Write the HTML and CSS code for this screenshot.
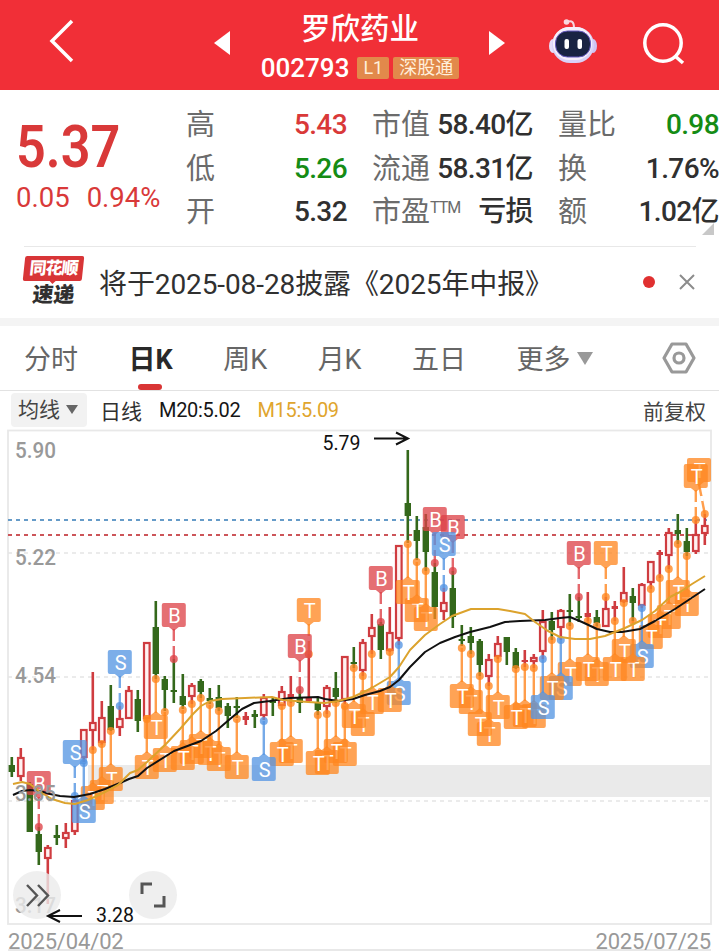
FILE: index.html
```html
<!DOCTYPE html>
<html lang="zh-CN">

<head>
    <meta charset="UTF-8">
    <title>罗欣药业 002793</title>
    <link rel="stylesheet" href="styles.css">
</head>

<body>
    <header class="header">
        <svg class="back" width="28" height="44" viewBox="0 0 28 44"><path d="M24 2 L4 22 L24 42" /></svg>
        <svg class="arrow prev" width="16" height="24" viewBox="0 0 16 24"><path d="M16 0 V24 L0 12 Z" /></svg>
        <div class="title">
            <h1>罗欣药业</h1>
            <div class="code">
                <span>002793</span>
                <span class="tag">L1</span>
                <span class="tag">深股通</span>
            </div>
        </div>
        <svg class="arrow" width="16" height="24" viewBox="0 0 16 24"><path d="M0 0 V24 L16 12 Z" /></svg>
        <svg class="robot" width="50" height="46" viewBox="0 0 50 46">
            <path d="M19 4 C24 2 26 4 26 10" fill="none" stroke="#f6d5df" stroke-width="2" />
            <circle cx="18.500" cy="4" r="2.800" fill="#f9d7df" />
            <ellipse cx="5" cy="28" rx="4" ry="7" fill="#e6ddf8" />
            <ellipse cx="45" cy="28" rx="4" ry="7" fill="#cfc3f2" />
            <rect x="4" y="9" width="42" height="36" rx="18" fill="#d9d2f8" />
            <rect x="5" y="9" width="39" height="33" rx="16" fill="#f6effb" />
            <rect x="7.500" y="13" width="35" height="26" rx="12" fill="#192342" stroke="#665bc0" stroke-width="1" />
            <rect x="16.500" y="21" width="4.500" height="10" rx="2" fill="#fff" />
            <rect x="29.500" y="21" width="4.500" height="10" rx="2" fill="#fff" />
        </svg>
        <svg class="search" width="42" height="42" viewBox="0 0 42 42"><circle cx="20" cy="20" r="18.200" /><path d="M32 33 L40 40" /></svg>
    </header>

    <section class="quote">
        <div class="price">
            <div class="now">5.37</div>
            <div class="change"><span>0.05</span><span>0.94%</span></div>
        </div>
        <dl class="stats">
            <dt>高</dt><dd class="up">5.43</dd>
            <dt>市值</dt><dd>58.40亿</dd>
            <dt>量比</dt><dd class="down">0.98</dd>
            <dt>低</dt><dd class="down">5.26</dd>
            <dt>流通</dt><dd>58.31亿</dd>
            <dt>换</dt><dd>1.76%</dd>
            <dt>开</dt><dd>5.32</dd>
            <dt>市盈<sup>TTM</sup></dt><dd>亏损</dd>
            <dt>额</dt><dd>1.02亿</dd>
        </dl>
        <i class="corner"></i>
    </section>

    <section class="notice">
        <div class="logo">
            <span class="logo-top">同花顺</span>
            <span class="logo-bottom">速递</span>
        </div>
        <p>将于2025-08-28披露《2025年中报》</p>
        <i class="dot"></i>
        <svg class="close" width="16" height="16" viewBox="0 0 16 16"><path d="M1 1 L15 15 M15 1 L1 15" /></svg>
    </section>

    <nav class="tabs">
        <a>分时</a>
        <a class="active">日K</a>
        <a>周K</a>
        <a>月K</a>
        <a>五日</a>
        <a class="more">更多<i class="caret"></i></a>
        <svg class="setting" width="34" height="32" viewBox="0 0 34 32"><path d="M10 2 H24 L32 16 L24 30 H10 L2 16 Z" /><circle cx="17" cy="16" r="5" /></svg>
    </nav>

    <div class="legend">
        <button>均线<i class="caret"></i></button>
        <span class="line-name">日线</span>
        <span class="m20">M20:5.02</span>
        <span class="m15">M15:5.09</span>
        <span class="adjust">前复权</span>
    </div>

    <svg id="chart" class="chart" width="719" height="498" viewBox="0 428 719 498"></svg>
    <footer class="dates"><span>2025/04/02</span><span>2025/07/25</span></footer>

    <script src="chart.js"></script>
</body>

</html>
```
FILE: styles.css
```css
* {
    box-sizing: border-box;
}

body {
    margin: 0;
    width: 719px;
    height: 952px;
    overflow: hidden;
    background: #fff;
    color: #303030;
    font-family: Roboto, "Noto Sans CJK SC", sans-serif;
}

h1, p, dl, dd {
    margin: 0;
}

.header {
    display: grid;
    grid-template-columns: 124px 136px 200px 74px 78px 102px;
    align-items: center;
    justify-items: center;
    height: 90px;
    padding-bottom: 6px;
    background: #f12f37;
    color: #fff;
}

.back, .search {
    fill: none;
    stroke: #fff;
    stroke-width: 3.5;
}

.back {
    margin-top: -3px;
}

.search {
    margin: 2px 0 0 2px;
}

.robot {
    margin-top: -4px;
}

.arrow {
    fill: #fff;
}

.prev {
    margin-left: 60px;
}

.title h1 {
    height: 44px;
    line-height: 44px;
    font-size: 29.5px;
    font-weight: 500;
    text-align: center;
}

.code {
    display: flex;
    align-items: center;
    height: 34px;
    font-size: 26px;
    font-weight: 500;
    white-space: nowrap;
}

.title {
    padding-top: 7px;
}

.tag {
    height: 22px;
    margin-left: 4px;
    padding: 0 6px;
    border-radius: 2px;
    background: #e2894b;
    color: #fff0dc;
    font-size: 18px;
    font-weight: 400;
    line-height: 21px;
}

.code span:nth-child(2) {
    margin-left: 8px;
}

.quote {
    position: relative;
    display: flex;
    height: 156px;
    padding-top: 12px;
}

.price {
    width: 186px;
    padding-left: 16px;
    color: #d93939;
}

.now {
    height: 72px;
    padding-top: 9px;
    font-size: 60px;
    font-weight: 600;
    line-height: 72px;
    transform: scaleX(.87);
    transform-origin: left;
}

.change {
    display: flex;
    gap: 17px;
    margin-top: 5px;
    font-size: 27.5px;
    line-height: 38px;
}

.stats {
    display: grid;
    grid-template-columns: 60px 101px 26px 60px 100px 25px 60px 101px;
    grid-auto-rows: 43.5px;
    width: 533px;
    padding-top: 1px;
    font-size: 28px;
    line-height: 43.5px;
    white-space: nowrap;
}

.stats dt {
    color: #6b6b6b;
    font-size: 29px;
    padding-top: 1px;
}

.stats dt:nth-of-type(3n+1) { grid-column: 1; }
.stats dd:nth-of-type(3n+1) { grid-column: 2; }
.stats dt:nth-of-type(3n+2) { grid-column: 4; margin-left: -1px; }
.stats dd:nth-of-type(3n+2) { grid-column: 5; }
.stats dt:nth-of-type(3n) { grid-column: 7; }
.stats dd:nth-of-type(3n) { grid-column: 8; }

.stats dd {
    display: flex;
    justify-content: flex-end;
    font-weight: 500;
    letter-spacing: -.6px;
}

.stats sup {
    font-size: 16px;
    letter-spacing: -1px;
    line-height: 0;
    vertical-align: 9px;
}

.stats .up {
    color: #d93939;
}

.stats .down {
    color: #158c15;
}

.corner {
    position: absolute;
    right: 5px;
    bottom: 11px;
    border-left: 12px solid transparent;
    border-bottom: 12px solid #c8c8c8;
}

.notice {
    display: flex;
    align-items: center;
    height: 80px;
    padding: 0 24px 8px;
    background:
        linear-gradient(#e8e8e8, #e8e8e8) 24px 0 / 672px 1px no-repeat,
        linear-gradient(#f4f4f4, #f4f4f4) 0 100% / 100% 8px no-repeat;
}

.logo {
    width: 59px;
    height: 52px;
    text-align: center;
    font-weight: 900;
}

.logo-top, .logo-bottom {
    display: block;
    transform: skewX(-6deg);
}

.logo-top {
    height: 25px;
    border-radius: 2px;
    background: #d83537;
    color: #fff;
    font-size: 17px;
    line-height: 24px;
    letter-spacing: -1px;
}

.logo-top::after {
    content: "";
    display: block;
    width: 0;
    margin: 0 auto;
    border: 4px solid transparent;
    border-top-color: #d83537;
}

.logo-bottom {
    font-size: 21px;
    line-height: 29px;
}

.notice p {
    flex: 1;
    padding-left: 16px;
    font-size: 28px;
    letter-spacing: -.1px;
    white-space: nowrap;
}

.dot {
    width: 12px;
    height: 12px;
    margin-right: 24px;
    border-radius: 50%;
    background: #e03030;
}

.close {
    fill: none;
    stroke: #8c8c8c;
    stroke-width: 2;
}

.tabs {
    display: flex;
    align-items: center;
    height: 65px;
    padding: 0 23px 0 24px;
    border-bottom: 1px solid #e2e2e2;
    color: #666;
    font-size: 27px;
    line-height: 64px;
}

.tabs a {
    height: 64px;
    margin-right: 50.5px;
    padding-top: 2px;
}

.tabs .active {
    position: relative;
    color: #292929;
    font-weight: 700;
}

.active::after {
    content: "";
    position: absolute;
    left: 9px;
    bottom: 0;
    width: 24px;
    height: 6px;
    border-radius: 3px;
    background: #d93535;
}

.caret {
    display: inline-block;
    border: 8px solid transparent;
    border-top: 13px solid #999;
    border-bottom: 0;
}

.tabs .more {
    margin-right: 0;
}

.more .caret {
    margin-left: 6px;
    vertical-align: 4px;
}

.setting {
    margin-left: auto;
    fill: none;
    stroke: #999;
    stroke-width: 3.2;
    stroke-linejoin: round;
}

.legend {
    display: flex;
    align-items: center;
    height: 37px;
    padding: 0 13px 0 11px;
    font-size: 21px;
}

.legend button {
    width: 76px;
    height: 34px;
    margin-right: 13px;
    padding: 0 2px 0 0;
    border: 0;
    border-radius: 4px;
    background: #f2f2f2;
    color: #444;
    font: inherit;
    line-height: 34px;
}

.legend .caret {
    margin-left: 6px;
    border-width: 9px 6px 0;
    border-top-color: #666;
    vertical-align: 3px;
}

.m20, .m15 {
    margin-left: 17px;
    color: #161616;
    font-size: 20px;
    letter-spacing: -.3px;
}

.legend .m15 {
    color: #e0a52e;
}

.adjust {
    margin-left: auto;
    color: #444;
}

.chart {
    display: block;
    font-size: 22px;
}

.axis {
    fill: #999;
    font-weight: 500;
}

.marker-text {
    fill: #fff;
    font-size: 20px;
    text-anchor: middle;
}

.peak {
    font-size: 19.5px;
    fill: #111;
}

.average {
    fill: none;
    stroke-width: 2;
    stroke-linejoin: round;
}

.dates {
    display: flex;
    justify-content: space-between;
    height: 25px;
    margin: 0 8px;
    padding-top: 2px;
    border-bottom: 2px solid #e8e8e8;
    color: #999;
    font-size: 22px;
    letter-spacing: -.15px;
    line-height: 27px;
}
```
FILE: chart.js
```js
// color, high, body top, body bottom, low
var candles = [
    ['g', 757, 765, 772, 777], ['r', 748, 757, 777, 781], ['g', 782, 784, 832, 832], ['g', 827, 834, 852, 865],
    ['r', 845, 847, 859, 904], ['g', 825, 835, 838, 845], ['r', 823, 832, 839, 848], ['r', 798, 800, 832, 835],
    ['r', 729, 729, 758, 762], ['r', 672, 722, 731, 750], ['r', 701, 717, 743, 745], ['g', 685, 706, 730, 731],
    ['r', 706, 718, 728, 736], ['r', 686, 690, 719, 719], ['g', 690, 699, 721, 732], ['r', 642, 642, 719, 719],
    ['g', 601, 627, 674, 679], ['g', 676, 679, 690, 711], ['g', 659, 690, 692, 703], ['g', 674, 696, 705, 709],
    ['r', 683, 685, 697, 704], ['g', 679, 681, 692, 698], ['g', 688, 698, 701, 704], ['g', 685, 697, 708, 711],
    ['g', 703, 706, 716, 728], ['g', 697, 706, 708, 718], ['r', 712, 716, 720, 725], ['g', 710, 714, 717, 728],
    ['r', 694, 697, 716, 720], ['g', 698, 700, 703, 716], ['r', 686, 691, 706, 706], ['r', 676, 694, 698, 703],
    ['g', 690, 697, 703, 713], ['r', 654, 697, 701, 702], ['g', 698, 703, 710, 715], ['r', 685, 687, 707, 714],
    ['g', 672, 688, 697, 703], ['r', 656, 656, 700, 704], ['g', 647, 662, 664, 668], ['r', 639, 642, 671, 676],
    ['r', 614, 627, 637, 654], ['g', 622, 624, 650, 659], ['r', 607, 632, 651, 652], ['r', 545, 545, 639, 645],
    ['g', 450, 503, 516, 543], ['g', 516, 530, 541, 560], ['g', 514, 527, 552, 571], ['g', 563, 572, 607, 619],
    ['r', 588, 602, 612, 620], ['g', 571, 588, 617, 628], ['g', 625, 639, 641, 646], ['g', 627, 636, 643, 654],
    ['g', 639, 641, 665, 676], ['r', 654, 659, 677, 686], ['r', 636, 643, 657, 659], ['g', 637, 637, 652, 665],
    ['g', 648, 652, 668, 669], ['r', 650, 660, 662, 667], ['r', 654, 657, 662, 668], ['r', 610, 621, 652, 659],
    ['g', 612, 621, 630, 640], ['r', 609, 610, 628, 640], ['g', 594, 610, 612, 626], ['g', 597, 616, 618, 622],
    ['r', 592, 613, 617, 621], ['g', 610, 617, 623, 626], ['r', 597, 608, 627, 627], ['r', 601, 606, 609, 621],
    ['r', 567, 592, 602, 603], ['g', 588, 596, 603, 621], ['r', 583, 584, 606, 608], ['r', 561, 561, 583, 589],
    ['r', 550, 552, 555, 578], ['r', 528, 532, 556, 569], ['g', 514, 530, 534, 544], ['g', 528, 541, 552, 556],
    ['r', 520, 534, 552, 554], ['r', 514, 525, 534, 545]
];

// candle index: label and anchor y
var below = {
    8: 'S763', 9: 'T750', 10: 'T744', 11: 'T731', 15: 'T719', 16: 'T679', 17: 'T712', 19: 'T710', 20: 'T704',
    21: 'T698', 22: 'T705', 23: 'T711', 25: 'T719', 28: 'S721', 30: 'T706', 31: 'T703', 34: 'T715', 35: 'T714',
    36: 'T703', 37: 'T706', 38: 'T668', 39: 'T676', 40: 'T654', 42: 'T652', 43: 'S645', 44: 'T544', 45: 'T562',
    46: 'T571', 50: 'T648', 51: 'T654', 52: 'T676', 53: 'T686', 54: 'T659', 56: 'T669', 57: 'T667', 58: 'T668',
    59: 'S659', 60: 'T640', 61: 'S640', 62: 'T626', 64: 'T621', 65: 'T626', 67: 'T621', 68: 'T603', 69: 'T621',
    70: 'S608', 71: 'T589', 72: 'T578', 73: 'T569', 74: 'T544', 75: 'T556'
};
var above = {
    3: 'B827', 7: 'S796', 12: 'S706', 18: 'B659', 32: 'B690', 33: 'T654', 41: 'B622', 47: 'B563', 48: 'S588',
    49: 'B571', 63: 'B597', 66: 'T597', 76: 'T520', 77: 'T514'
};
// these two sit on top of their neighbours
var front = [59, 48];
var m20 = '13,795 22,791 30,790 40,791 50,794 60,796 74,797 90,794 105,789 120,783 129,779 138,776 147,768 174,751 201,741 216,731 230,719 242,709 254,703 270,701 290,698 318,697 325,699 338,701 353,699 365,695 380,691 390,687 399,680 410,667 425,652 440,643 455,637 470,632 490,627 505,622 520,621 545,620 560,618 570,617 582,622 597,629 610,632 622,632 640,629 655,621 675,609 690,599 705,589';
var m15 = '13,784 22,782 30,784 40,792 52,799 65,803 75,804 88,800 105,792 118,785 130,773 138,770 147,762 165,745 180,729 193,714 201,706 210,701 222,699 245,698 272,697 283,700 308,702 325,703 338,701 353,697 370,689 390,677 399,667 410,650 425,635 440,624 452,616 471,609 498,609 510,611 525,614 535,622 548,631 560,637 575,639 590,639 605,636 625,628 642,620 655,611 670,597 680,592 692,584 705,576';
var colors = { B: '#de4248', S: '#5495e3', T: '#ff8720' };

function px(i) {
    return 11.8 + i * 9;
}

function dashed(y, color, right, dash, width) {
    return `<path d="M8 ${y} H${right}" stroke="${color}" stroke-width="${width}" stroke-dasharray="${dash}"/>`;
}

function candle(c, i) {
    var x = px(i);
    var color = c[0] == 'g' ? '#34681b' : '#cf3c40';
    var h = c[3] - c[2];
    var s = `<path d="M${x} ${c[1]} V${c[4]}" stroke="${color}" stroke-width="2.6"/>`;
    if (c[0] == 'g' || h < 5) {
        return s + `<rect x="${x - 3.2}" y="${c[2]}" width="6.4" height="${h}" fill="${color}"/>`;
    }
    return s + `<rect x="${x - 2.8}" y="${c[2] + 1}" width="5.6" height="${h - 2}" fill="#fff1f1" stroke="${color}" stroke-width="2.2"/>`;
}

function marker(i, value, up) {
    var x = px(i);
    var type = value[0];
    var y = +value.slice(1);
    var cy = up ? y - 44 : y + 48;
    var bx = i == 77 ? 699 : x;
    var color = colors[type];
    var s = `<circle cx="${x}" cy="${y}" r="4" fill="${color}" opacity=".78"/>`;
    if (up) {
        s += `<path d="M${bx} ${cy + 14} L${x} ${y}" stroke="${color}" stroke-width="2.4" opacity=".8"/>`;
        s += `<path d="M${(bx + x) / 2} ${y - 18} v5" stroke="#fff" stroke-width="3.5"/>`;
    } else {
        s += `<path d="M${x} ${y} V${cy - 14}" stroke="${color}" stroke-width="2.4" opacity=".8"/>`;
    }
    var tip = up ? `M${bx - 5} ${cy + 12} h10 l-5 4 Z` : `M${bx - 5} ${cy - 12} h10 l-5 -4 Z`;
    s += `<g fill="${color}" opacity=".76"><rect x="${bx - 12}" y="${cy - 12}" width="24" height="24" rx="2"/><path d="${tip}"/></g>`;
    return s + `<text class="marker-text" x="${bx + .8}" y="${cy + 7.5}">${type}</text>`;
}

function markersAt(i) {
    return (below[i] ? marker(i, below[i], false) : '') + (above[i] ? marker(i, above[i], true) : '');
}

var svg = '<rect x="88" y="765" width="623" height="32" fill="#eaeaea"/>';
svg += '<rect x="8" y="430.500" width="703" height="493.500" fill="none" stroke="#e8e8e8" stroke-width="1.800"/>';
[553, 677, 801].forEach(y => svg += dashed(y, '#e5e5e5', 711, '4 4', 1.4));
svg += dashed(520, '#669bc8', 707, '4 4', 1.8) + dashed(535, '#cc5559', 707, '4 4', 1.8);
svg += candles.map(candle).join('');
for (var i = candles.length - 1; i >= 0; i--) {
    if (!front.includes(i)) svg += markersAt(i);
}
svg += front.map(markersAt).join('');
svg += `<polyline class="average" stroke="#111" points="${m20}"/><polyline class="average" stroke="#dca32d" points="${m15}"/>`;
[['5.90', 458], ['5.22', 565], ['4.54', 683], ['3.85', 801], ['3.17', 913]].forEach(a => {
    svg += `<text class="axis" x="15" y="${a[1]}" textLength="41" lengthAdjust="spacingAndGlyphs">${a[0]}</text>`;
});

// round buttons
svg += '<g fill="#ebebeb" fill-opacity=".800"><circle cx="37" cy="895" r="24"/><circle cx="153" cy="895" r="24"/></g>';
svg += '<g fill="none" stroke="#555" stroke-width="2.400"><path d="M27 885 L37 895.500 L27 906 M38 885 L48 895.500 L38 906"/><path d="M142 894 V884 H152 M154 906 H164 V896" stroke-width="3"/></g>';

// high and low pointers
svg += '<g fill="none" stroke="#111" stroke-width="2"><path d="M374 438.500 H407 M396 432.500 L408 438.500 L396 444.500"/><path d="M82 916 H49 M60 910 L48 916 L60 922"/></g>';
svg += '<text class="peak" x="322.500" y="450">5.79</text><text class="peak" x="96" y="922">3.28</text>';
document.getElementById('chart').innerHTML = svg;
```
